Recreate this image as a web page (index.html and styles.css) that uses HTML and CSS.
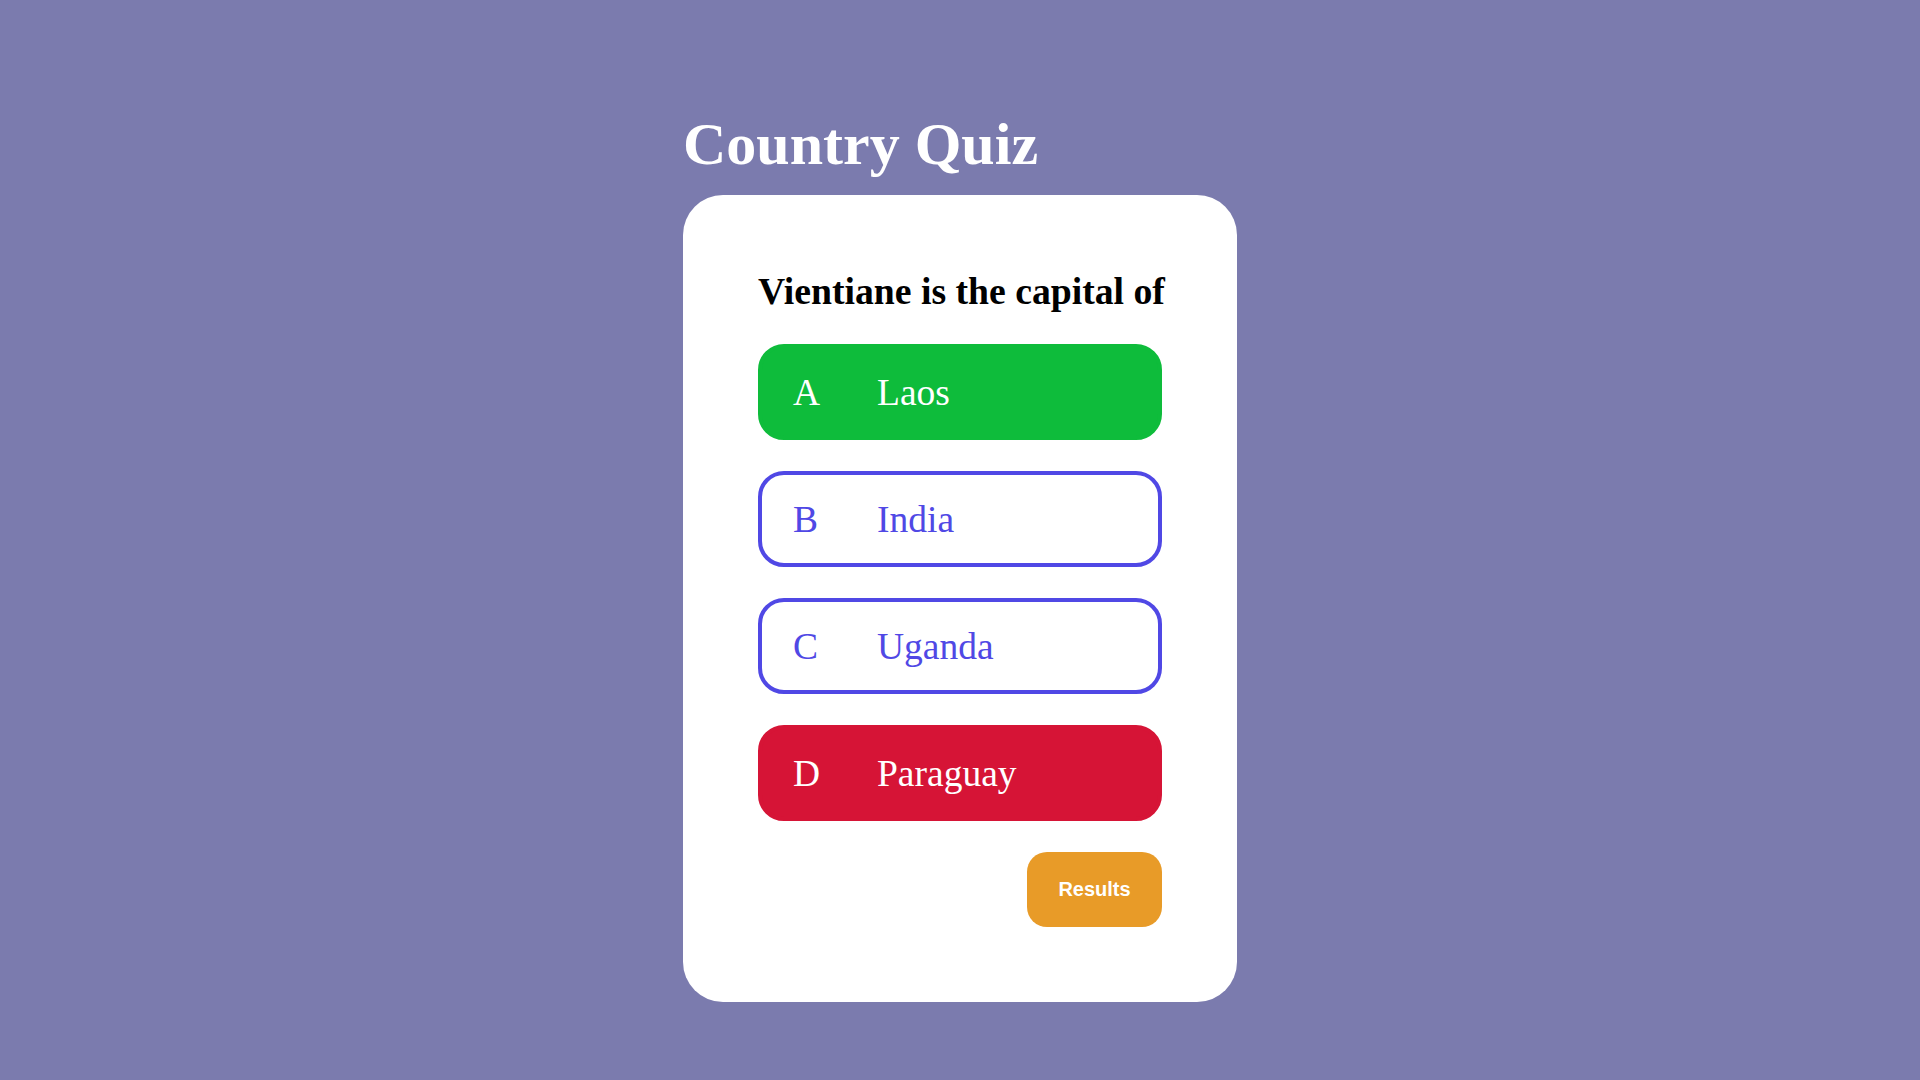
FILE: index.html
```html
<!DOCTYPE html>
<html lang="en">
<head>
<meta charset="utf-8">
<title>Country Quiz</title>
<link rel="stylesheet" href="styles.css">
</head>
<body>
<main class="quiz">
  <h1 class="quiz-title">Country Quiz</h1>
  <section class="card">
    <h2 class="question">Vientiane is the capital of</h2>
    <div class="options">
      <button class="option option-correct"><span class="letter">A</span><span class="label">Laos</span></button>
      <button class="option"><span class="letter">B</span><span class="label">India</span></button>
      <button class="option"><span class="letter">C</span><span class="label">Uganda</span></button>
      <button class="option option-wrong"><span class="letter">D</span><span class="label">Paraguay</span></button>
      <button class="results">Results</button>
    </div>
  </section>
</main>
</body>
</html>
```

FILE: styles.css
```css
html, body {
  margin: 0;
  padding: 0;
}

body {
  background: #7b7bae;
  font-family: "Liberation Serif", "Times New Roman", serif;
  min-height: 1080px;
}

.quiz {
  width: 554px;
  margin: 0 auto;
  padding-top: 110px;
}

.quiz-title {
  margin: 0 0 16px 0;
  font-size: 60px;
  font-weight: 700;
  line-height: normal;
  color: #ffffff;
}

.card {
  background: #ffffff;
  border-radius: 40px;
  padding: 74px 75px 75px;
  box-sizing: border-box;
  width: 554px;
}

.question {
  margin: 0;
  font-size: 37.7px;
  font-weight: 700;
  line-height: normal;
  color: #000000;
  white-space: nowrap;
}

.options {
  display: flex;
  flex-direction: column;
  gap: 31px;
  margin-top: 31px;
}

.option {
  display: flex;
  align-items: center;
  width: 100%;
  height: 96px;
  box-sizing: border-box;
  padding: 0 0 0 31px;
  border: 4px solid #5048e5;
  border-radius: 26px;
  background: #ffffff;
  color: #5048e5;
  font-family: "Liberation Serif", "Times New Roman", serif;
  font-size: 37.5px;
  text-align: left;
  cursor: pointer;
}

.option-correct {
  background: #0ebc3b;
  border-color: #0ebc3b;
  color: #ffffff;
}

.option-wrong {
  background: #d61436;
  border-color: #d61436;
  color: #ffffff;
}

.letter {
  width: 84px;
  flex: none;
}

.results {
  align-self: flex-end;
  width: 135px;
  height: 75px;
  border: none;
  border-radius: 20px;
  background: #e89b28;
  color: #ffffff;
  font-family: "Liberation Sans", Arial, sans-serif;
  font-size: 20px;
  font-weight: 700;
  cursor: pointer;
}
```
